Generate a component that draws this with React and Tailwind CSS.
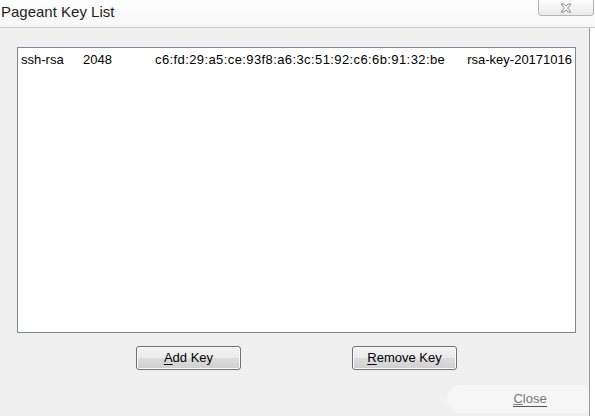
function WinButton({ children, className = '' }) {
  return (
    <button
      className={`h-[24px] w-[105px] rounded-[3px] border border-[#707070] bg-[linear-gradient(to_bottom,#f2f2f2_0%,#ebebeb_50%,#dddddd_50%,#cfcfcf_100%)] text-[13px] text-black shadow-[inset_0_0_0_1px_#fcfcfc] ${className}`}
    >
      {children}
    </button>
  )
}

export default function App() {
  return (
    <div className="flex h-[416px] w-[595px] flex-col overflow-hidden bg-white font-['Liberation_Sans',Arial,sans-serif]">
      {/* title bar */}
      <div className="flex h-[28px] shrink-0 items-start justify-between border-b border-[#c8c8c8] bg-[linear-gradient(to_bottom,#ffffff,#f7f7f7)]">
        <span className="ml-[1px] mt-[3px] text-[15px] leading-[18px] text-[#1e1e1e]">Pageant Key List</span>
        <div className="mr-[1px] flex h-[16px] w-[56px] items-center justify-center rounded-b-[4px] border border-t-0 border-[#b4b4b4] bg-[linear-gradient(to_bottom,#fdfdfd,#eaeaea)]">
          <svg width="14" height="10" viewBox="0 0 14 10">
            <path
              d="M2 1h3l2 2.2L9 1h3L8.6 5 12 9H9L7 6.8 5 9H2l3.4-4z"
              fill="#ffffff"
              stroke="#8a8a8a"
              strokeWidth="1"
              strokeLinejoin="round"
            />
          </svg>
        </div>
      </div>

      {/* client area */}
      <div className="flex w-[590px] flex-1 flex-col border-r border-[#9a9a9a] bg-[#f0f0f0] pl-[17px]">
        <div className="mt-[19px] h-[286px] w-[559px] border border-[#828790] bg-white px-[3px] pt-[4px]">
          <div className="flex text-[13px] leading-[16px] text-black">
            <span className="w-[62px] shrink-0">ssh-rsa</span>
            <span className="w-[72px] shrink-0">2048</span>
            <span className="flex-1 tracking-[0.4px]">c6:fd:29:a5:ce:93f8:a6:3c:51:92:c6:6b:91:32:be</span>
            <span className="shrink-0">rsa-key-20171016</span>
          </div>
        </div>

        <div className="mt-[13px] flex">
          <WinButton className="ml-[119px]">
            <span className="underline underline-offset-2">A</span>dd Key
          </WinButton>
          <WinButton className="ml-[111px]">
            <span className="underline underline-offset-2">R</span>emove Key
          </WinButton>
        </div>

        <div className="mt-[15px] flex">
          <div className="ml-[430px] flex h-[28px] w-[143px] items-center justify-center rounded-l-[14px] bg-[#f6f6f6]">
            <span className="ml-[24px] border-b border-[#555] text-[13px] leading-[15px] text-[#777]">
              <span className="underline">C</span>lose
            </span>
          </div>
        </div>
      </div>
    </div>
  )
}
